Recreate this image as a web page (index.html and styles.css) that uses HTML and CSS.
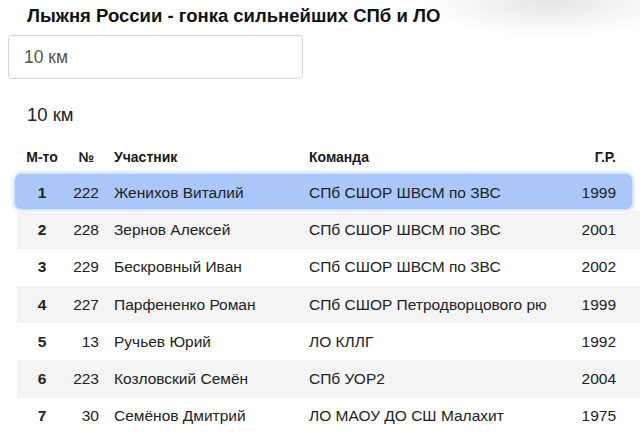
FILE: index.html
```html
<!DOCTYPE html>
<html lang="ru">
<head>
<meta charset="utf-8">
<title>Лыжня России</title>
<link rel="stylesheet" href="styles.css">
</head>
<body>
<div class="smudge"></div>
<h1 class="title">Лыжня России - гонка сильнейших СПб и ЛО</h1>
<div class="select">10 км</div>
<h2 class="dist">10 км</h2>
<div class="table">
  <div class="row head">
    <div class="c-pl">М-то</div><div class="c-no">№</div><div class="c-name">Участник</div><div class="c-team">Команда</div><div class="c-yr">Г.Р.</div>
  </div>
  <div class="row sel">
    <div class="c-pl">1</div><div class="c-no">222</div><div class="c-name">Женихов Виталий</div><div class="c-team">СПб СШОР ШВСМ по ЗВС</div><div class="c-yr">1999</div>
  </div>
  <div class="row alt">
    <div class="c-pl">2</div><div class="c-no">228</div><div class="c-name">Зернов Алексей</div><div class="c-team">СПб СШОР ШВСМ по ЗВС</div><div class="c-yr">2001</div>
  </div>
  <div class="row">
    <div class="c-pl">3</div><div class="c-no">229</div><div class="c-name">Бескровный Иван</div><div class="c-team">СПб СШОР ШВСМ по ЗВС</div><div class="c-yr">2002</div>
  </div>
  <div class="row alt">
    <div class="c-pl">4</div><div class="c-no">227</div><div class="c-name">Парфененко Роман</div><div class="c-team">СПб СШОР Петродворцового рю</div><div class="c-yr">1999</div>
  </div>
  <div class="row">
    <div class="c-pl">5</div><div class="c-no">13</div><div class="c-name">Ручьев Юрий</div><div class="c-team">ЛО КЛЛГ</div><div class="c-yr">1992</div>
  </div>
  <div class="row alt">
    <div class="c-pl">6</div><div class="c-no">223</div><div class="c-name">Козловский Семён</div><div class="c-team">СПб УОР2</div><div class="c-yr">2004</div>
  </div>
  <div class="row">
    <div class="c-pl">7</div><div class="c-no">30</div><div class="c-name">Семёнов Дмитрий</div><div class="c-team">ЛО МАОУ ДО СШ Малахит</div><div class="c-yr">1975</div>
  </div>
</div>
</body>
</html>
```

FILE: styles.css
```css
html, body {
  margin: 0;
  padding: 0;
  background: #fff;
  overflow: hidden;
}
body {
  width: 640px;
  height: 432px;
  position: relative;
  font-family: "Liberation Sans", Arial, sans-serif;
  color: #222;
}
.smudge {
  position: absolute;
  left: 400px;
  top: 0;
  width: 240px;
  height: 50px;
  background: radial-gradient(ellipse 130px 38px at 150px 0, rgba(0,0,0,0.10) 0%, rgba(0,0,0,0.05) 50%, rgba(0,0,0,0) 100%);
  pointer-events: none;
}
.title {
  margin: 0;
  padding: 5px 0 0 27px;
  height: 30px;
  box-sizing: border-box;
  font-size: 18.5px;
  font-weight: bold;
  line-height: 21px;
  color: #111;
  position: relative;
}
.select {
  margin: 5px 0 0 8px;
  width: 295px;
  height: 44px;
  box-sizing: border-box;
  border: 1px solid #d4d4d4;
  border-radius: 4px;
  padding: 0 0 0 15px;
  font-size: 17.5px;
  line-height: 42px;
  color: #555;
}
.dist {
  margin: 0;
  padding: 25px 0 0 27px;
  height: 61px;
  box-sizing: border-box;
  font-size: 18.5px;
  font-weight: normal;
  line-height: 22px;
  color: #222;
}
.table {
  margin-left: 17px;
  width: 623px;
}
.row {
  display: grid;
  grid-template-columns: 50px 32px 210px 247px 60px 24px;
  height: 37.3px;
  align-items: center;
  font-size: 15.5px;
  position: relative;
}
.row > div {
  position: relative;
  white-space: nowrap;
}
.row.head {
  height: 34px;
  font-size: 14px;
  font-weight: bold;
  color: #1a1a1a;
}
.c-pl {
  text-align: center;
  font-weight: bold;
}
.c-no {
  text-align: right;
}
.head .c-no {
  padding-right: 5px;
}
.c-name {
  padding-left: 15px;
}
.c-yr {
  text-align: right;
}
.row.alt {
  background: #f4f4f4;
}
.row.sel::before {
  content: "";
  position: absolute;
  left: -2px;
  right: 8px;
  top: 0;
  bottom: 2px;
  background: #a9c8f9;
  border-radius: 6px;
  box-shadow: 0 0 4px 1px rgba(120, 165, 245, 0.55);
}
```
